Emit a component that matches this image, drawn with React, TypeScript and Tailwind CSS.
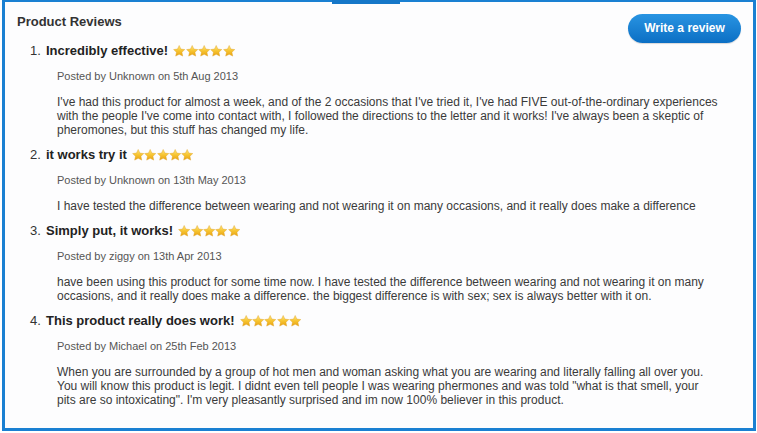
import React from "react";

const reviews = [
  {
    title: "Incredibly effective!",
    meta: "Posted by Unknown on 5th Aug 2013",
    body: "I've had this product for almost a week, and of the 2 occasions that I've tried it, I've had FIVE out-of-the-ordinary experiences with the people I've come into contact with, I followed the directions to the letter and it works! I've always been a skeptic of pheromones, but this stuff has changed my life.",
  },
  {
    title: "it works try it",
    meta: "Posted by Unknown on 13th May 2013",
    body: "I have tested the difference between wearing and not wearing it on many occasions, and it really does make a difference",
  },
  {
    title: "Simply put, it works!",
    meta: "Posted by ziggy on 13th Apr 2013",
    body: "have been using this product for some time now. I have tested the difference between wearing and not wearing it on many occasions, and it really does make a difference. the biggest difference is with sex; sex is always better with it on.",
  },
  {
    title: "This product really does work!",
    meta: "Posted by Michael on 25th Feb 2013",
    body: "When you are surrounded by a group of hot men and woman asking what you are wearing and literally falling all over you. You will know this product is legit. I didnt even tell people I was wearing phermones and was told \"what is that smell, your pits are so intoxicating\". I'm very pleasantly surprised and im now 100% believer in this product.",
  },
];

function Star({ id }: { id: string }) {
  return (
    <svg width="12.4" height="12" viewBox="0 0 24 23" className="block">
      <defs>
        <linearGradient id={id} x1="0" y1="0" x2="0" y2="1">
          <stop offset="0" stopColor="#ffe680" />
          <stop offset="0.5" stopColor="#f7c531" />
          <stop offset="1" stopColor="#e8a114" />
        </linearGradient>
      </defs>
      <path
        d="M12 0.8l3.3 7 7.5.9-5.5 5.2 1.5 7.5L12 17.8l-6.8 3.6 1.5-7.5L1.2 8.7l7.5-.9z"
        fill={`url(#${id})`}
        stroke="#e0a020"
        strokeWidth="0.8"
        strokeLinejoin="round"
      />
    </svg>
  );
}

function Stars({ idx }: { idx: number }) {
  return (
    <div className="flex items-center ml-[5px] mt-[-1px]">
      {[0, 1, 2, 3, 4].map((i) => (
        <Star key={i} id={`g${idx}-${i}`} />
      ))}
    </div>
  );
}

export default function App() {
  return (
    <div
      className="w-[757px] h-[433px] bg-white pl-[2px] pr-[1px] pb-[2px] text-[#333]"
      style={{ fontFamily: '"Liberation Sans", Arial, sans-serif' }}
    >
      <div className="relative h-full border-[3px] border-t-[2px] border-[#1a80d2] bg-[#fdfdfe] pl-[12px] pr-[12px] pt-[12px]">
        <div className="absolute top-[-2px] left-[327px] w-[68px] h-[4px] bg-[#1577c8]" />
        <div className="flex justify-between items-start h-[16px]">
          <h2 className="text-[13px] leading-[16px] font-bold text-[#333]">Product Reviews</h2>
          <button className="h-[29px] w-[113px] rounded-full bg-gradient-to-b from-[#2894e2] to-[#0b6fc4] text-white text-[12px] font-bold leading-[29px] shadow-[0_1px_1px_rgba(0,0,0,0.15)]">
            Write a review
          </button>
        </div>
        <div className="mt-[13px] pl-[13px]">
          {reviews.map((r, i) => (
            <div key={i} className={i === 0 ? "" : "mt-[10px]"}>
              <div className="flex items-center h-[16px]">
                <span className="w-[16px] text-[13px] leading-[16px]">{i + 1}.</span>
                <span className="text-[13px] leading-[16px] font-bold text-[#222]">{r.title}</span>
                <Stars idx={i} />
              </div>
              <div className="pl-[27px]">
                <div className="mt-[10px] text-[11px] leading-[14px] text-[#555]">{r.meta}</div>
                <div className="mt-[12px] w-[663px] text-[12px] leading-[14px] text-[#3a3a3a]">{r.body}</div>
              </div>
            </div>
          ))}
        </div>
      </div>
    </div>
  );
}
